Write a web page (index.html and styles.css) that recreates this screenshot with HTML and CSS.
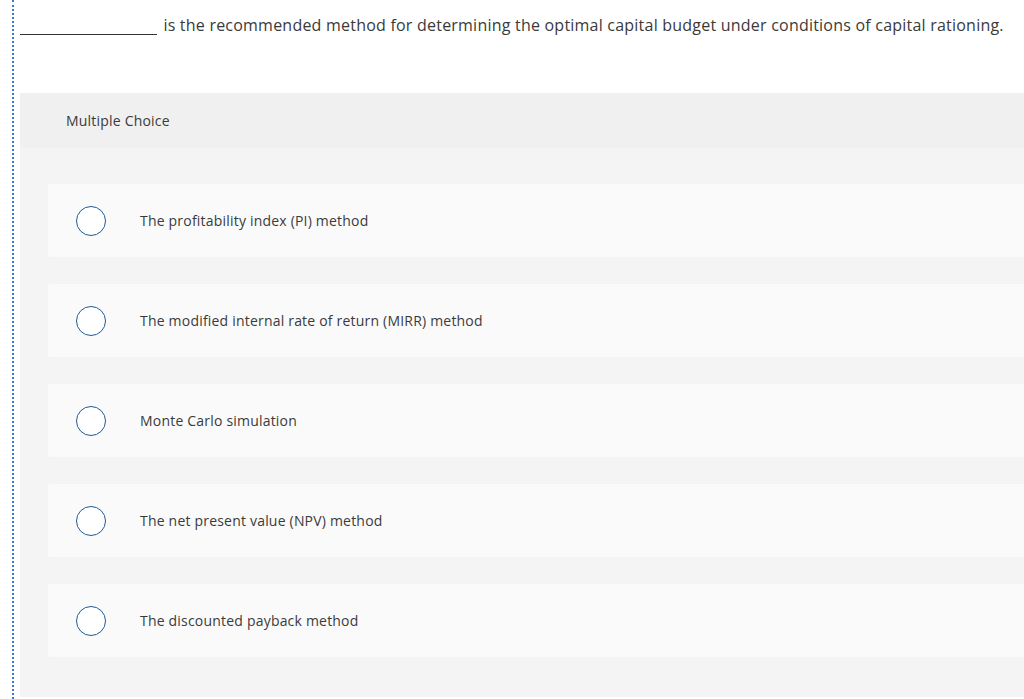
FILE: index.html
```html
<!DOCTYPE html>
<html>
<head>
<meta charset="utf-8">
<link rel="stylesheet" href="styles.css">
</head>
<body>
<div class="page">
  <div class="question">
    <p class="prompt"><span class="blank"></span> is the recommended method for determining the optimal capital budget under conditions of capital rationing.</p>
    <div class="panel">
      <div class="panel-head">Multiple Choice</div>
      <div class="panel-body">
        <div class="choice"><span class="radio"></span><span class="label">The profitability index (PI) method</span></div>
        <div class="choice"><span class="radio"></span><span class="label">The modified internal rate of return (MIRR) method</span></div>
        <div class="choice"><span class="radio"></span><span class="label">Monte Carlo simulation</span></div>
        <div class="choice"><span class="radio"></span><span class="label">The net present value (NPV) method</span></div>
        <div class="choice"><span class="radio"></span><span class="label">The discounted payback method</span></div>
      </div>
    </div>
  </div>
</div>
</body>
</html>
```
FILE: styles.css
```css
html, body {
  margin: 0;
  padding: 0;
  background: #fff;
  overflow: hidden;
}
body {
  font-family: "Open Sans", "Liberation Sans", sans-serif;
  color: #333;
}
.page {
  height: 699px;
  margin-left: 12px;
  border-left: 2px dotted #3a78c8;
  padding-left: 6px;
  width: 1040px;
}
.prompt {
  margin: 0;
  padding-top: 14px;
  font-size: 16px;
  line-height: 22px;
  letter-spacing: 0.22px;
  color: #3a3a3a;
}
.blank {
  display: inline-block;
  width: 137px;
  border-bottom: 1px solid #333;
  vertical-align: -4px;
  height: 16px;
  margin-right: 2px;
}
.panel {
  margin-top: 57px;
  background: #f4f4f4;
}
.panel-head {
  background: #f0f0f0;
  height: 55px;
  display: flex;
  align-items: center;
  padding-left: 46px;
  font-size: 14px;
  letter-spacing: 0.2px;
  color: #3a3a3a;
}
.panel-body {
  padding: 36px 0 40px 28px;
  display: flex;
  flex-direction: column;
  gap: 27px;
}
.choice {
  background: #fafafa;
  height: 73px;
  display: flex;
  align-items: center;
  padding-left: 28px;
  border-radius: 3px 0 0 3px;
}
.radio {
  width: 28px;
  height: 28px;
  border: 1.5px solid #1f5a96;
  border-radius: 50%;
  background: #fff;
  flex: none;
}
.label {
  margin-left: 34px;
  font-size: 14px;
  letter-spacing: 0.2px;
  color: #3a3a3a;
}
```
